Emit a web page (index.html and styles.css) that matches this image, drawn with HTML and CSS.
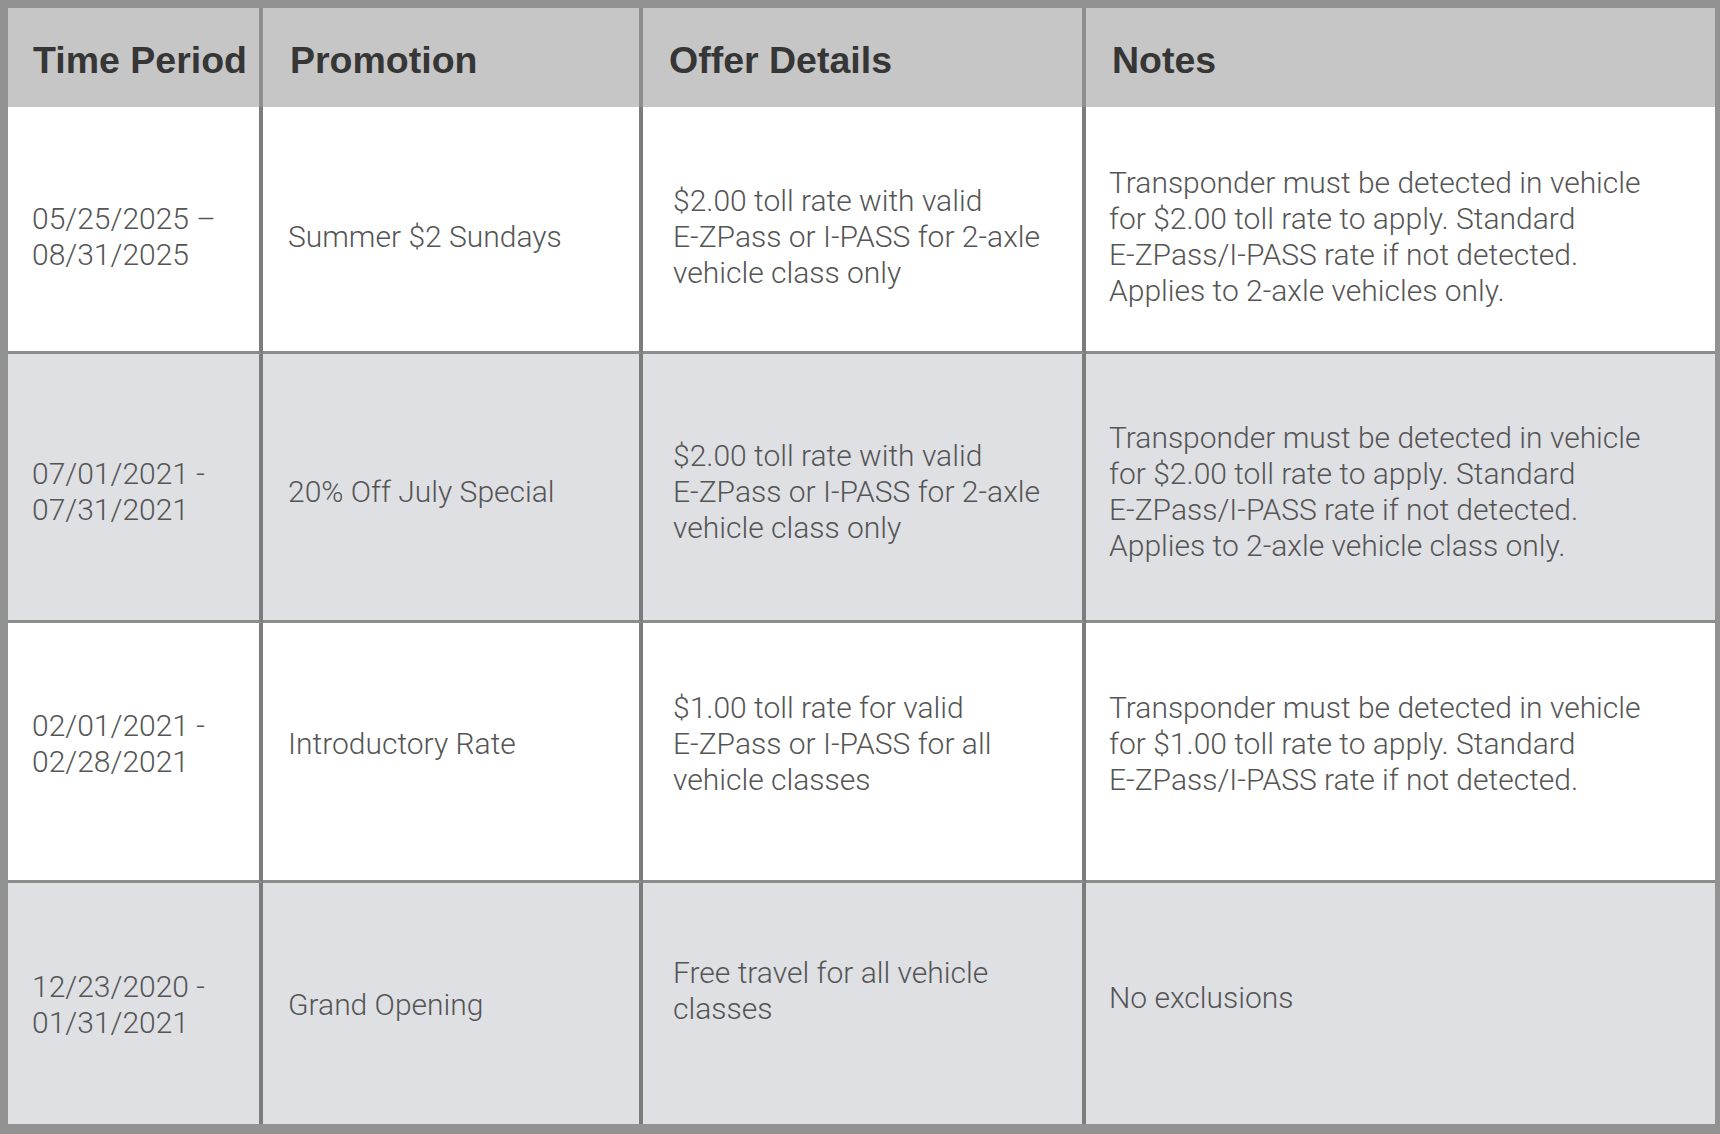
FILE: index.html
```html
<!DOCTYPE html>
<html lang="en">
<head>
<meta charset="utf-8">
<title>Promotions</title>
<link rel="stylesheet" href="styles.css">
</head>
<body>
<div class="tbl" role="table">
  <div class="row head" role="row">
    <div class="cell c1" role="columnheader">Time Period</div>
    <div class="cell c2" role="columnheader">Promotion</div>
    <div class="cell c3" role="columnheader">Offer Details</div>
    <div class="cell c4" role="columnheader">Notes</div>
  </div>
  <div class="row r1 light" role="row">
    <div class="cell c1" role="cell"><p>05/25/2025 –<br>08/31/2025</p></div>
    <div class="cell c2" role="cell"><p>Summer $2 Sundays</p></div>
    <div class="cell c3" role="cell"><p>$2.00 toll rate with valid<br>E-ZPass or I-PASS for 2-axle<br>vehicle class only</p></div>
    <div class="cell c4" role="cell"><p>Transponder must be detected in vehicle<br>for $2.00 toll rate to apply. Standard<br>E-ZPass/I-PASS rate if not detected.<br>Applies to 2-axle vehicles only.</p></div>
  </div>
  <div class="row r2 shade" role="row">
    <div class="cell c1" role="cell"><p>07/01/2021 -<br>07/31/2021</p></div>
    <div class="cell c2" role="cell"><p>20% Off July Special</p></div>
    <div class="cell c3" role="cell"><p>$2.00 toll rate with valid<br>E-ZPass or I-PASS for 2-axle<br>vehicle class only</p></div>
    <div class="cell c4" role="cell"><p>Transponder must be detected in vehicle<br>for $2.00 toll rate to apply. Standard<br>E-ZPass/I-PASS rate if not detected.<br>Applies to 2-axle vehicle class only.</p></div>
  </div>
  <div class="row r3 light" role="row">
    <div class="cell c1" role="cell"><p>02/01/2021 -<br>02/28/2021</p></div>
    <div class="cell c2" role="cell"><p>Introductory Rate</p></div>
    <div class="cell c3" role="cell"><p>$1.00 toll rate for valid<br>E-ZPass or I-PASS for all<br>vehicle classes</p></div>
    <div class="cell c4" role="cell"><p>Transponder must be detected in vehicle<br>for $1.00 toll rate to apply. Standard<br>E-ZPass/I-PASS rate if not detected.</p></div>
  </div>
  <div class="row r4 shade last" role="row">
    <div class="cell c1" role="cell"><p>12/23/2020 -<br>01/31/2021</p></div>
    <div class="cell c2" role="cell"><p>Grand Opening</p></div>
    <div class="cell c3 up-lg" role="cell"><p>Free travel for all vehicle<br>classes</p></div>
    <div class="cell c4 up-sm" role="cell"><p>No exclusions</p></div>
  </div>
</div>
</body>
</html>
```

FILE: styles.css
```css
html, body {
  margin: 0;
  padding: 0;
  background: #ffffff;
}

.tbl {
  display: grid;
  grid-template-columns: 255px 380px 443px 629px;
  grid-template-rows: 99px 247px 269px 260px 241px;
  width: 1720px;
  height: 1134px;
  box-sizing: border-box;
  border-style: solid;
  border-color: #929292;
  border-width: 8px 5px 10px 8px;
  font-family: "Roboto", "Liberation Sans", sans-serif;
}

.row {
  display: contents;
}

.cell {
  box-sizing: border-box;
  display: flex;
  align-items: center;
  white-space: nowrap;
  padding-left: 24px;
}

.cell p {
  margin: 0;
}

.c1, .c2, .c3 {
  border-right: 4px solid #7c7c7c;
}

.c2 { padding-left: 25px; }
.c3 { padding-left: 30px; }
.c4 { padding-left: 23px; }

.head .cell {
  background: #c6c6c6;
  font-family: "Liberation Sans", Arial, sans-serif;
  font-weight: 700;
  font-size: 37.5px;
  color: #363636;
  padding-top: 5px;
  border-right-color: #8e8e8e;
}

.head .c1 { padding-left: 25px; }
.head .c2 { padding-left: 27px; }
.head .c3 { padding-left: 26px; }
.head .c4 { padding-left: 26px; }

.r1 .cell, .r2 .cell, .r3 .cell {
  border-bottom: 3px solid #8c8c8c;
}

.light .cell { background: #ffffff; }
.shade .cell { background: #dfe0e4; }

.r1 .cell, .r2 .cell, .r3 .cell, .r4 .cell {
  font-weight: 300;
  font-size: 30px;
  line-height: 36px;
  color: #555555;
}

.r1 .cell { padding-top: 16px; }
.r2 .cell { padding-top: 10px; }
.r3 .cell { padding-bottom: 16px; }
.r4 .cell { padding-top: 2px; }
.r4 .up-lg { padding-top: 0; padding-bottom: 26px; }
.r4 .up-sm { padding-top: 0; padding-bottom: 12px; }
```
